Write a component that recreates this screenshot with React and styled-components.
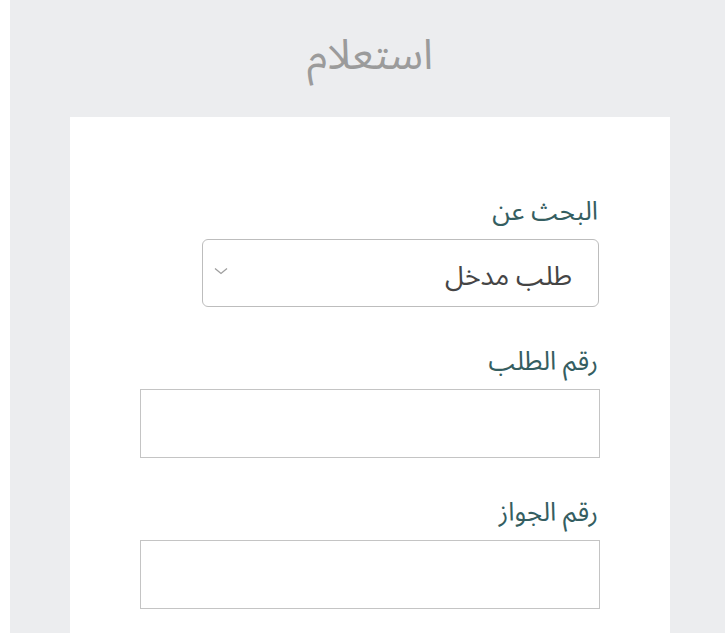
import React from "react";
import styled, { createGlobalStyle } from "styled-components";

const GlobalStyle = createGlobalStyle`
  html, body {
    margin: 0;
    padding: 0;
    background: #ffffff;
  }
  * {
    box-sizing: border-box;
  }
`;

const fields = [
  { id: "request", label: "رقم الطلب" },
  { id: "passport", label: "رقم الجواز" },
];

export default function App() {
  return (
    <>
      <GlobalStyle />
      <Page dir="rtl">
        <Main>
          <Column>
            <Title>استعلام</Title>
            <Card>
              <Field>
                <Label htmlFor="searchBy">البحث عن</Label>
                <SelectBox>
                  <SelectValue id="searchBy">طلب مدخل</SelectValue>
                  <Chevron viewBox="0 0 14 8">
                    <path d="M1 1.5 L7 6.5 L13 1.5" />
                  </Chevron>
                </SelectBox>
              </Field>
              {fields.map((field) => (
                <Field key={field.id}>
                  <Label htmlFor={field.id}>{field.label}</Label>
                  <Input id={field.id} type="text" />
                </Field>
              ))}
            </Card>
          </Column>
        </Main>
      </Page>
    </>
  );
}

const Page = styled.div`
  display: flex;
  height: 633px;
  background: #ffffff;
  font-family: "Noto Sans Arabic", "DejaVu Sans", sans-serif;
`;

const Main = styled.div`
  flex: 1;
  margin-left: 10px;
  background: #ecedef;
  display: flex;
  justify-content: flex-start;
  padding-right: 55px;
  overflow: hidden;
`;

const Column = styled.div`
  width: 600px;
  display: flex;
  flex-direction: column;
`;

const Title = styled.h1`
  margin: 0;
  height: 117px;
  display: flex;
  align-items: center;
  justify-content: center;
  padding-bottom: 6px;
  font-size: 42px;
  font-weight: 400;
  color: #9b9b9b;
`;

const Card = styled.div`
  flex: 1;
  background: #ffffff;
  padding: 78px 70px 0;
  display: flex;
  flex-direction: column;
  gap: 38px;
`;

const Field = styled.div`
  display: flex;
  flex-direction: column;
  align-items: flex-start;
`;

const Label = styled.label`
  font-size: 26px;
  line-height: 34px;
  color: #355e61;
  margin-bottom: 10px;
  padding-right: 2px;
`;

const SelectBox = styled.div`
  width: 397px;
  height: 68px;
  margin-right: 1px;
  border: 1.5px solid #bdbdbd;
  border-radius: 6px;
  display: flex;
  align-items: center;
  justify-content: space-between;
  padding: 6px 26px 0 0;
`;

const SelectValue = styled.span`
  font-size: 27px;
  color: #454545;
`;

const Chevron = styled.svg`
  width: 14px;
  height: 8px;
  margin-left: 11px;
  margin-bottom: 10px;
  fill: none;
  stroke: #9e9e9e;
  stroke-width: 1.3;
`;

const Input = styled.input`
  width: 460px;
  height: 69px;
  border: 1.5px solid #c4c4c4;
  border-radius: 0;
  background: #ffffff;
  font-size: 20px;
  outline: none;
`;
